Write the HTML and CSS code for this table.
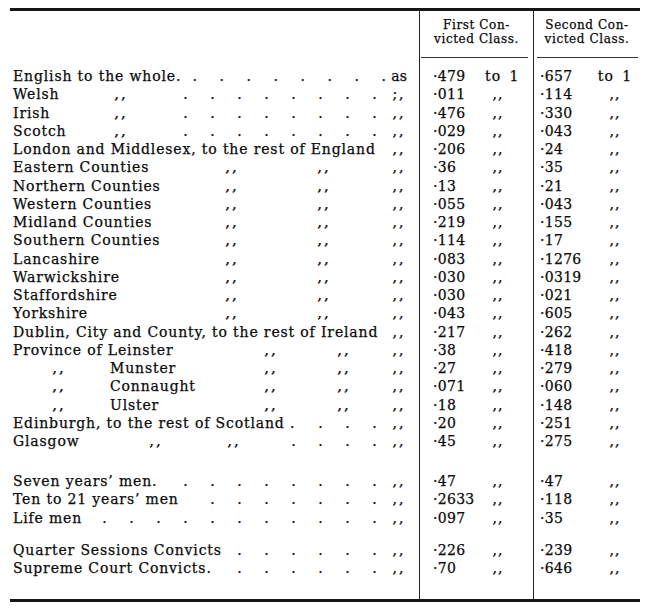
FILE: index.html
```html
<!DOCTYPE html>
<html lang="en">
<head>
<meta charset="utf-8">
<title>Convicted Classes</title>
<link rel="stylesheet" href="styles.css">
</head>
<body>
<div class="tbl">
  <div class="row head">
    <div class="cl"></div>
    <div class="cn"><div class="htxt">First Con-<br>victed Class.</div><div class="hrule r1"></div></div>
    <div class="cn"><div class="htxt">Second Con-<br>victed Class.</div><div class="hrule r2"></div></div>
  </div>
  <div class="row sp sp-top"><div class="cl"></div><div class="cn"></div><div class="cn"></div></div>

  <div class="row"><div class="cl"><span class="nm">English to the whole.</span><span class="dots"><i>.</i><i>.</i><i>.</i><i>.</i><i>.</i><i>.</i><i>.</i><i>.</i></span><span class="end as">as</span></div><div class="cn a"><span class="n">·479</span><span class="m">to 1</span></div><div class="cn b"><span class="n">·657</span><span class="m">to 1</span></div></div>
  <div class="row"><div class="cl"><span class="nm w97">Welsh</span><span class="dt">,,</span><span class="dots"><i>.</i><i>.</i><i>.</i><i>.</i><i>.</i><i>.</i><i>.</i><i>.</i></span><span class="end">;,</span></div><div class="cn a"><span class="n">·011</span><span class="m">,,</span></div><div class="cn b"><span class="n">·114</span><span class="m">,,</span></div></div>
  <div class="row"><div class="cl"><span class="nm w97">Irish</span><span class="dt">,,</span><span class="dots"><i>.</i><i>.</i><i>.</i><i>.</i><i>.</i><i>.</i><i>.</i><i>.</i></span><span class="end">,,</span></div><div class="cn a"><span class="n">·476</span><span class="m">,,</span></div><div class="cn b"><span class="n">·330</span><span class="m">,,</span></div></div>
  <div class="row"><div class="cl"><span class="nm w97">Scotch</span><span class="dt">,,</span><span class="dots"><i>.</i><i>.</i><i>.</i><i>.</i><i>.</i><i>.</i><i>.</i><i>.</i></span><span class="end">,,</span></div><div class="cn a"><span class="n">·029</span><span class="m">,,</span></div><div class="cn b"><span class="n">·043</span><span class="m">,,</span></div></div>
  <div class="row"><div class="cl"><span class="nm">London and Middlesex, to the rest of England</span><span class="end">,,</span></div><div class="cn a"><span class="n">·206</span><span class="m">,,</span></div><div class="cn b"><span class="n">·24</span><span class="m">,,</span></div></div>
  <div class="row"><div class="cl"><span class="nm w208">Eastern Counties</span><span class="dt">,,</span><span class="dt g72">,,</span><span class="end">,,</span></div><div class="cn a"><span class="n">·36</span><span class="m">,,</span></div><div class="cn b"><span class="n">·35</span><span class="m">,,</span></div></div>
  <div class="row"><div class="cl"><span class="nm w208">Northern Counties</span><span class="dt">,,</span><span class="dt g72">,,</span><span class="end">,,</span></div><div class="cn a"><span class="n">·13</span><span class="m">,,</span></div><div class="cn b"><span class="n">·21</span><span class="m">,,</span></div></div>
  <div class="row"><div class="cl"><span class="nm w208">Western Counties</span><span class="dt">,,</span><span class="dt g72">,,</span><span class="end">,,</span></div><div class="cn a"><span class="n">·055</span><span class="m">,,</span></div><div class="cn b"><span class="n">·043</span><span class="m">,,</span></div></div>
  <div class="row"><div class="cl"><span class="nm w208">Midland Counties</span><span class="dt">,,</span><span class="dt g72">,,</span><span class="end">,,</span></div><div class="cn a"><span class="n">·219</span><span class="m">,,</span></div><div class="cn b"><span class="n">·155</span><span class="m">,,</span></div></div>
  <div class="row"><div class="cl"><span class="nm w208">Southern Counties</span><span class="dt">,,</span><span class="dt g72">,,</span><span class="end">,,</span></div><div class="cn a"><span class="n">·114</span><span class="m">,,</span></div><div class="cn b"><span class="n">·17</span><span class="m">,,</span></div></div>
  <div class="row"><div class="cl"><span class="nm w208">Lancashire</span><span class="dt">,,</span><span class="dt g72">,,</span><span class="end">,,</span></div><div class="cn a"><span class="n">·083</span><span class="m">,,</span></div><div class="cn b"><span class="n">·1276</span><span class="m">,,</span></div></div>
  <div class="row"><div class="cl"><span class="nm w208">Warwickshire</span><span class="dt">,,</span><span class="dt g72">,,</span><span class="end">,,</span></div><div class="cn a"><span class="n">·030</span><span class="m">,,</span></div><div class="cn b"><span class="n">·0319</span><span class="m">,,</span></div></div>
  <div class="row"><div class="cl"><span class="nm w208">Staffordshire</span><span class="dt">,,</span><span class="dt g72">,,</span><span class="end">,,</span></div><div class="cn a"><span class="n">·030</span><span class="m">,,</span></div><div class="cn b"><span class="n">·021</span><span class="m">,,</span></div></div>
  <div class="row"><div class="cl"><span class="nm w208">Yorkshire</span><span class="dt">,,</span><span class="dt g72">,,</span><span class="end">,,</span></div><div class="cn a"><span class="n">·043</span><span class="m">,,</span></div><div class="cn b"><span class="n">·605</span><span class="m">,,</span></div></div>
  <div class="row"><div class="cl"><span class="nm">Dublin, City and County, to the rest of Ireland</span><span class="end">,,</span></div><div class="cn a"><span class="n">·217</span><span class="m">,,</span></div><div class="cn b"><span class="n">·262</span><span class="m">,,</span></div></div>
  <div class="row"><div class="cl"><span class="nm w247">Province of Leinster</span><span class="dt">,,</span><span class="dt g53">,,</span><span class="end">,,</span></div><div class="cn a"><span class="n">·38</span><span class="m">,,</span></div><div class="cn b"><span class="n">·418</span><span class="m">,,</span></div></div>
  <div class="row"><div class="cl"><span class="dt lead">,,</span><span class="nm sub">Munster</span><span class="dt">,,</span><span class="dt g53">,,</span><span class="end">,,</span></div><div class="cn a"><span class="n">·27</span><span class="m">,,</span></div><div class="cn b"><span class="n">·279</span><span class="m">,,</span></div></div>
  <div class="row"><div class="cl"><span class="dt lead">,,</span><span class="nm sub">Connaught</span><span class="dt">,,</span><span class="dt g53">,,</span><span class="end">,,</span></div><div class="cn a"><span class="n">·071</span><span class="m">,,</span></div><div class="cn b"><span class="n">·060</span><span class="m">,,</span></div></div>
  <div class="row"><div class="cl"><span class="dt lead">,,</span><span class="nm sub">Ulster</span><span class="dt">,,</span><span class="dt g53">,,</span><span class="end">,,</span></div><div class="cn a"><span class="n">·18</span><span class="m">,,</span></div><div class="cn b"><span class="n">·148</span><span class="m">,,</span></div></div>
  <div class="row"><div class="cl"><span class="nm">Edinburgh, to the rest of Scotland .</span><span class="dots"><i>.</i><i>.</i><i>.</i></span><span class="end">,,</span></div><div class="cn a"><span class="n">·20</span><span class="m">,,</span></div><div class="cn b"><span class="n">·251</span><span class="m">,,</span></div></div>
  <div class="row"><div class="cl"><span class="nm w132">Glasgow</span><span class="dt">,,</span><span class="dt g58">,,</span><span class="dots"><i>.</i><i>.</i><i>.</i><i>.</i></span><span class="end">,,</span></div><div class="cn a"><span class="n">·45</span><span class="m">,,</span></div><div class="cn b"><span class="n">·275</span><span class="m">,,</span></div></div>

  <div class="row sp sp-g2"><div class="cl"></div><div class="cn"></div><div class="cn"></div></div>

  <div class="row"><div class="cl"><span class="nm">Seven years’ men.</span><span class="dots"><i>.</i><i>.</i><i>.</i><i>.</i><i>.</i><i>.</i><i>.</i><i>.</i></span><span class="end">,,</span></div><div class="cn a"><span class="n">·47</span><span class="m">,,</span></div><div class="cn b"><span class="n">·47</span><span class="m">,,</span></div></div>
  <div class="row"><div class="cl"><span class="nm">Ten to 21 years’ men</span><span class="dots"><i>.</i><i>.</i><i>.</i><i>.</i><i>.</i><i>.</i><i>.</i></span><span class="end">,,</span></div><div class="cn a"><span class="n">·2633</span><span class="m">,,</span></div><div class="cn b"><span class="n">·118</span><span class="m">,,</span></div></div>
  <div class="row"><div class="cl"><span class="nm">Life men</span><span class="dots"><i>.</i><i>.</i><i>.</i><i>.</i><i>.</i><i>.</i><i>.</i><i>.</i><i>.</i><i>.</i><i>.</i></span><span class="end">,,</span></div><div class="cn a"><span class="n">·097</span><span class="m">,,</span></div><div class="cn b"><span class="n">·35</span><span class="m">,,</span></div></div>

  <div class="row sp sp-g3"><div class="cl"></div><div class="cn"></div><div class="cn"></div></div>

  <div class="row"><div class="cl"><span class="nm">Quarter Sessions Convicts</span><span class="dots"><i>.</i><i>.</i><i>.</i><i>.</i><i>.</i><i>.</i></span><span class="end">,,</span></div><div class="cn a"><span class="n">·226</span><span class="m">,,</span></div><div class="cn b"><span class="n">·239</span><span class="m">,,</span></div></div>
  <div class="row"><div class="cl"><span class="nm">Supreme Court Convicts.</span><span class="dots"><i>.</i><i>.</i><i>.</i><i>.</i><i>.</i><i>.</i></span><span class="end">,,</span></div><div class="cn a"><span class="n">·70</span><span class="m">,,</span></div><div class="cn b"><span class="n">·646</span><span class="m">,,</span></div></div>

  <div class="row sp sp-bot"><div class="cl"></div><div class="cn"></div><div class="cn"></div></div>
</div>
</body>
</html>
```

FILE: styles.css
```css
html, body {
  margin: 0;
  padding: 0;
  background: #ffffff;
}

body {
  font-family: "DejaVu Serif", "Liberation Serif", serif;
  font-size: 14px;
  color: #0a0a0a;
  -webkit-text-stroke: 0.25px #0a0a0a;
}

.tbl {
  margin: 8px 0 0 10px;
  width: 630px;
  border-top: 3px solid #161616;
  border-bottom: 3px solid #161616;
}

.row {
  display: grid;
  grid-template-columns: 409px 114px 107px;
  line-height: 18.25px;
  height: 18.25px;
}

.cl {
  display: flex;
  align-items: baseline;
  padding: 0 11px 0 3px;
  white-space: nowrap;
  letter-spacing: 0.85px;
}

.cn {
  border-left: 1px solid #222222;
  display: flex;
  align-items: baseline;
  white-space: nowrap;
}

/* header */
.row.head {
  height: auto;
  line-height: 14px;
}

.head .cn {
  flex-direction: column;
  align-items: stretch;
}

.htxt {
  padding-top: 7px;
  font-size: 12px;
  line-height: 14px;
  letter-spacing: 0.6px;
  text-align: center;
}

.hrule {
  margin-top: 11px;
  height: 0;
  border-top: 1px solid #333333;
}

.hrule.r1 { margin-left: 1px; margin-right: 5px; }
.hrule.r2 { margin-left: 3px; margin-right: 2px; }

/* spacers */
.row.sp-top { height: 9px; }
.row.sp-g2 { height: 21.75px; }
.row.sp-g3 { height: 14.25px; }
.row.sp-bot { height: 21.5px; }

/* label cell parts */
.nm { flex: 0 0 auto; }
.w97 { width: 97px; }
.w132 { width: 132px; }
.w208 { width: 208px; }
.w247 { width: 247px; }

.nm.sub {
  width: 150px;
  margin-left: 42px;
}

.dt {
  display: inline-block;
  width: 20px;
  text-align: center;
  letter-spacing: 2px;
  text-indent: 2px;
  font-size: 15px;
}

.dt.lead { margin-left: 35px; }
.dt.g72 { margin-left: 72px; }
.dt.g53 { margin-left: 53px; }
.dt.g58 { margin-left: 58px; }

.dots {
  margin-left: auto;
  display: flex;
  flex: 0 0 auto;
}

.dots i {
  font-style: normal;
  display: inline-block;
  width: 27px;
  text-align: center;
  letter-spacing: 0;
}

.end {
  margin-left: auto;
  width: 20px;
  flex: 0 0 auto;
  text-align: center;
  letter-spacing: 2px;
  text-indent: 2px;
}

.dots + .end { margin-left: 0; }

.dots + .end.as {
  margin-left: -6px;
  margin-right: 6px;
  text-align: left;
  letter-spacing: 0.3px;
  text-indent: 0;
}

/* number cells */
.cn.a { padding-left: 13px; }
.cn.b { padding-left: 6px; }

.n { flex: 0 0 auto; letter-spacing: 0.3px; }
.cn.a .n { width: 52px; }
.cn.b .n { width: 55px; }

.m {
  flex: 0 0 auto;
  text-align: center;
  word-spacing: 3px;
  letter-spacing: 1px;
}

.cn.a .m { width: 26px; }
.cn.b .m { width: 40px; }
```
